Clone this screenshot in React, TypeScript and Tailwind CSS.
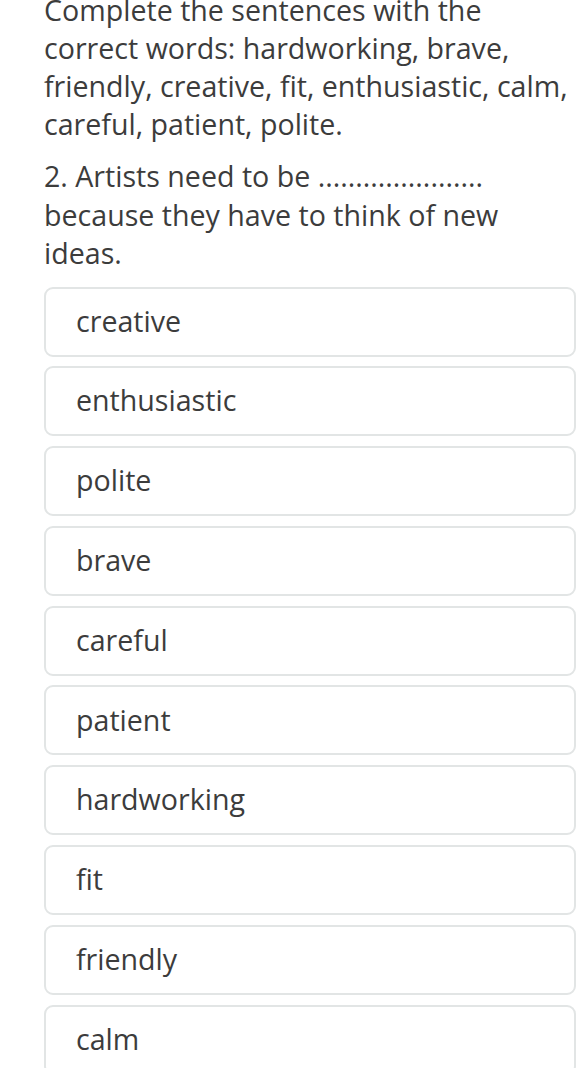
const words = [
  "creative",
  "enthusiastic",
  "polite",
  "brave",
  "careful",
  "patient",
  "hardworking",
  "fit",
  "friendly",
  "calm",
];

export default function App() {
  return (
    <div
      className="w-[576px] h-[1068px] overflow-hidden bg-white text-[#3c3c3c]"
      style={{ fontFamily: '"Open Sans", sans-serif' }}
    >
      <div className="pl-[44px] -mt-[9px]">
        <p className="text-[28.6px] leading-[38px] whitespace-nowrap">
          Complete the sentences with the
          <br />
          correct words: hardworking, brave,
          <br />
          friendly, creative, fit, enthusiastic, calm,
          <br />
          careful, patient, polite.
        </p>
        <p className="text-[28.6px] leading-[38.5px] mt-[14px] whitespace-nowrap">
          2. Artists need to be ......................
          <br />
          because they have to think of new
          <br />
          ideas.
        </p>

        <div className="mt-[14px] flex flex-col gap-[9.8px]">
          {words.map((w) => (
            <div
              key={w}
              className="h-[70px] flex items-center pl-[30px] pb-[1px] border-2 border-[#e2e5e5] rounded-[9px] bg-white text-[28.6px]"
            >
              {w}
            </div>
          ))}
        </div>
      </div>
    </div>
  );
}
